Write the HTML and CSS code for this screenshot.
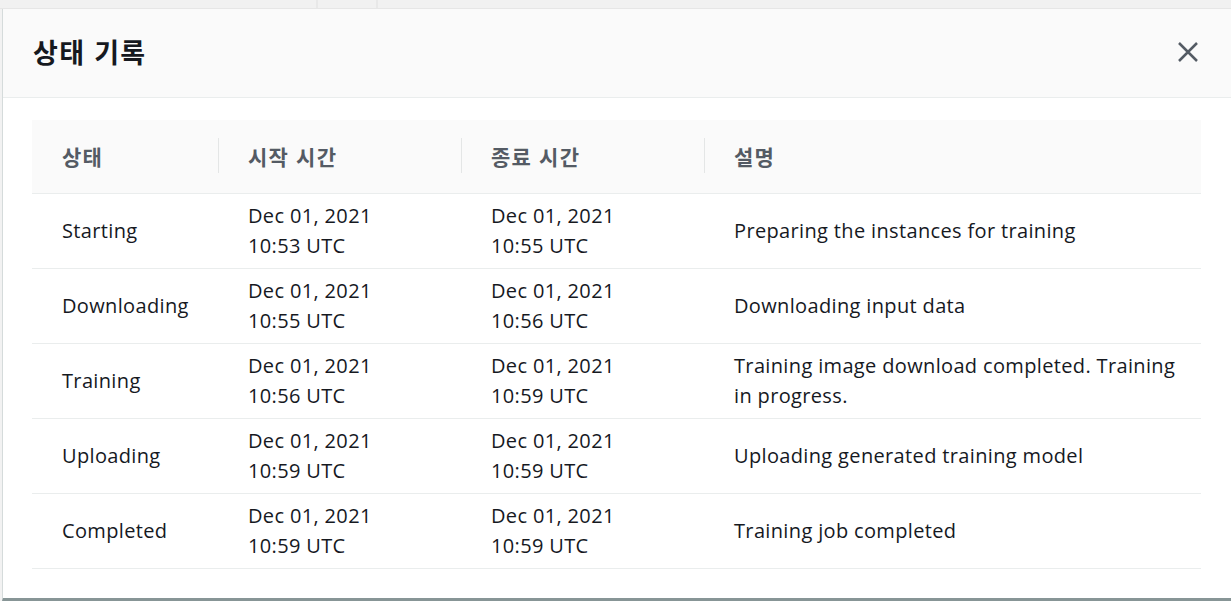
FILE: index.html
```html
<!DOCTYPE html>
<html lang="ko">
<head>
<meta charset="utf-8">
<link rel="stylesheet" href="styles.css">
</head>
<body>
<div class="backdrop">
  <div class="topstrip">
    <div class="seg seg-a"></div>
    <div class="seg seg-b"></div>
    <div class="seg seg-c"></div>
  </div>
  <div class="modal">
    <div class="modal-header">
      <h2 class="title">상태 기록</h2>
      <button class="close" aria-label="닫기">
        <svg width="22" height="22" viewBox="0 0 22 22"><path d="M2 2 L20 20 M20 2 L2 20" stroke="#545b64" stroke-width="2.5" fill="none"/></svg>
      </button>
    </div>
    <div class="modal-body">
      <table class="tbl">
        <colgroup>
          <col class="c1"><col class="c2"><col class="c3"><col class="c4">
        </colgroup>
        <thead>
          <tr>
            <th><span>상태</span></th>
            <th class="sep"><span>시작 시간</span></th>
            <th class="sep"><span>종료 시간</span></th>
            <th class="sep"><span>설명</span></th>
          </tr>
        </thead>
        <tbody>
          <tr><td>Starting</td><td>Dec 01, 2021<br>10:53 UTC</td><td>Dec 01, 2021<br>10:55 UTC</td><td>Preparing the instances for training</td></tr>
          <tr><td>Downloading</td><td>Dec 01, 2021<br>10:55 UTC</td><td>Dec 01, 2021<br>10:56 UTC</td><td>Downloading input data</td></tr>
          <tr><td>Training</td><td>Dec 01, 2021<br>10:56 UTC</td><td>Dec 01, 2021<br>10:59 UTC</td><td>Training image download completed. Training in progress.</td></tr>
          <tr><td>Uploading</td><td>Dec 01, 2021<br>10:59 UTC</td><td>Dec 01, 2021<br>10:59 UTC</td><td>Uploading generated training model</td></tr>
          <tr><td>Completed</td><td>Dec 01, 2021<br>10:59 UTC</td><td>Dec 01, 2021<br>10:59 UTC</td><td>Training job completed</td></tr>
        </tbody>
      </table>
    </div>
  </div>
</div>
</body>
</html>
```
FILE: styles.css
```css
html, body {
  margin: 0;
  padding: 0;
  background: #f2f2f2;
  width: 1231px;
  height: 601px;
  overflow: hidden;
}
body {
  font-family: "Open Sans", "Noto Sans CJK KR", sans-serif;
  color: #16191f;
}
.backdrop {
  display: flex;
  flex-direction: column;
  height: 601px;
}
.topstrip {
  height: 8px;
  display: flex;
  background: #f1f1f1;
  border-bottom: 1px solid #e6e6e6;
}
.seg-a { width: 316px; border-right: 2px solid #e8e8e8; }
.seg-b { width: 58px; border-right: 2px solid #e8e8e8; }
.seg-c { flex: 1; }
.modal {
  margin-left: 2px;
  width: 1240px;
  height: 592px;
  background: #ffffff;
  border-left: 1px solid #d5dbdb;
  border-bottom: 3px solid #879596;
  box-sizing: border-box;
  display: flex;
  flex-direction: column;
}
.modal-header {
  height: 89px;
  background: #fafafa;
  border-bottom: 1px solid #eaeded;
  box-sizing: border-box;
  display: flex;
  align-items: center;
  justify-content: space-between;
  padding: 0 0 3px 30px;
}
.title {
  margin: 0;
  font-family: "Noto Sans CJK KR", sans-serif;
  font-size: 27px;
  font-weight: 700;
  color: #16191f;
  letter-spacing: 1.3px;
}
.close {
  border: 0;
  background: none;
  padding: 0;
  margin-right: 43px;
  margin-top: 1px;
  width: 22px;
  height: 22px;
  display: flex;
}
.modal-body {
  padding: 22px 0 0 29px;
}
.tbl {
  border-collapse: collapse;
  table-layout: fixed;
  width: 1169px;
}
.c1 { width: 186px; }
.c2 { width: 243px; }
.c3 { width: 243px; }
.c4 { width: 497px; }
.tbl thead tr {
  background: #fafafa;
  height: 73px;
}
.tbl th {
  text-align: left;
  font-family: "Noto Sans CJK KR", sans-serif;
  font-weight: 700;
  font-size: 21px;
  color: #545b64;
  padding: 0 0 0 30px;
  border-bottom: 1px solid #eaeded;
  position: relative;
  letter-spacing: 1.2px;
}
.tbl th.sep::before {
  content: "";
  position: absolute;
  left: 0;
  top: 18px;
  bottom: 20px;
  width: 1px;
  background: #e4e6e6;
}
.tbl td {
  height: 74px;
  padding: 0 20px 0 30px;
  font-size: 20px;
  letter-spacing: 0.35px;
  line-height: 30px;
  border-bottom: 1px solid #eaeded;
  vertical-align: middle;
  color: #16191f;
}
```
